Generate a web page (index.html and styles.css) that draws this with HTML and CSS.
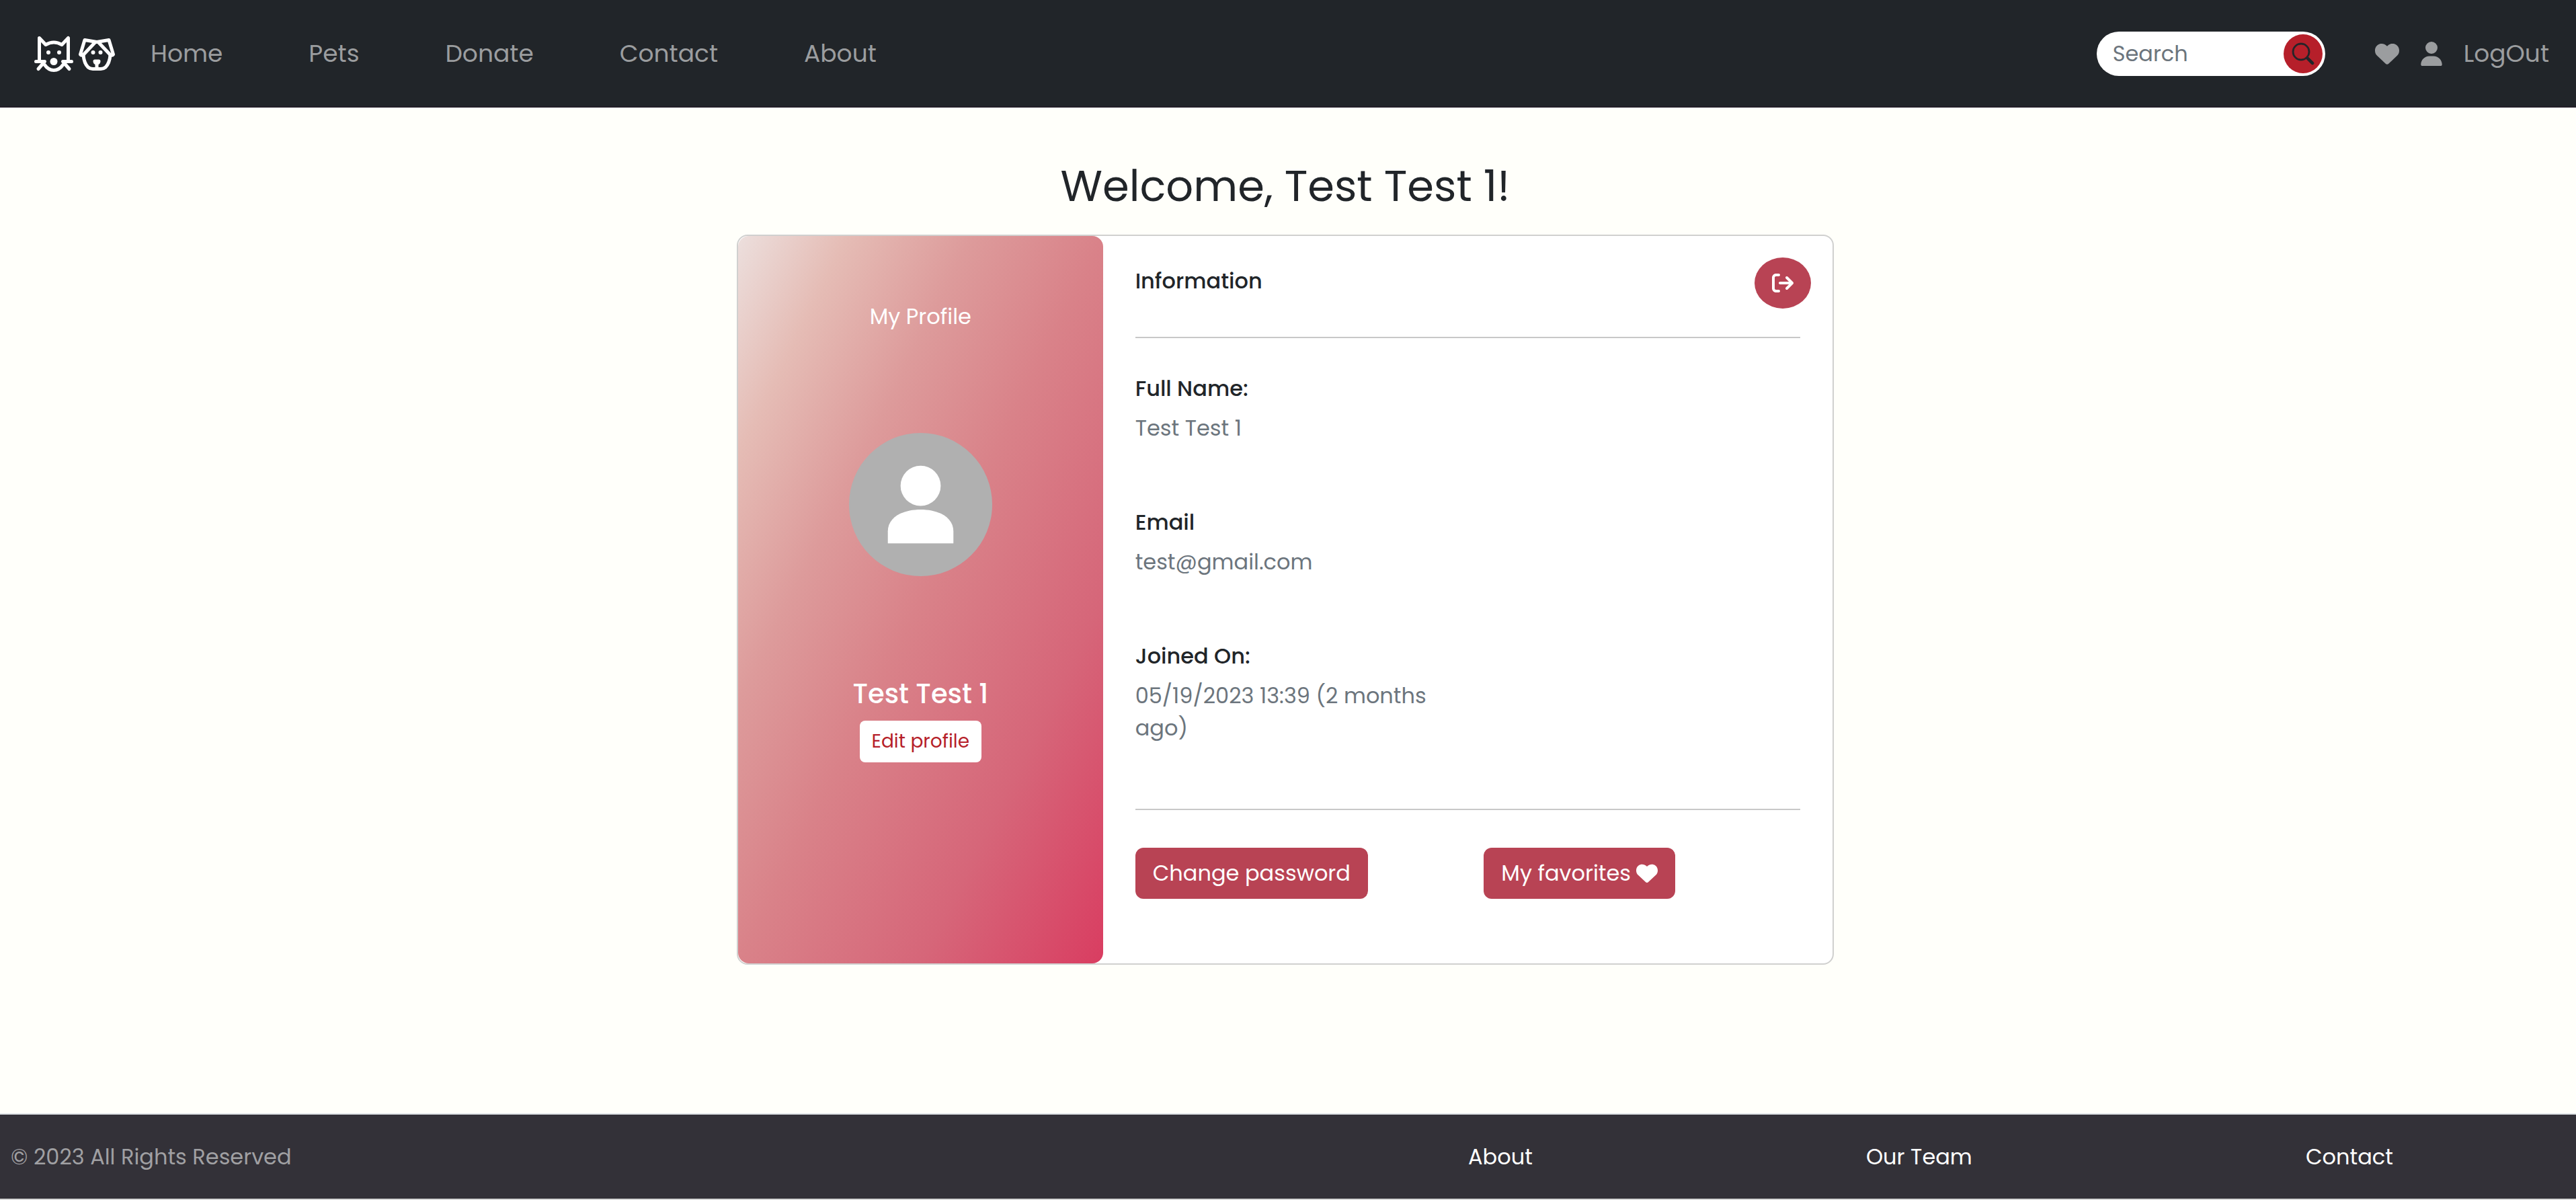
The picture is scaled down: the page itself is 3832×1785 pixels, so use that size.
FILE: index.html
```html
<!DOCTYPE html>
<html lang="en">
<head>
<meta charset="utf-8">
<meta name="viewport" content="width=device-width, initial-scale=1">
<title>My Profile</title>
<link rel="stylesheet" href="styles.css">
</head>
<body>
<header class="navbar">
  <a class="brand" href="#" aria-label="Pets home">
    <svg class="brand-icon" viewBox="0 0 60 60" fill="none" stroke="currentColor" stroke-width="5" stroke-linecap="round" stroke-linejoin="round">
      <path d="M8.500 39V6.500L18 16.500Q30 9.500 42 16.500L51.500 6.500V39"/>
      <path d="M3.500 41.500H16.500L7 52.500M56.500 41.500H43.500L53 52.500M16 46Q22 54.500 30 54.500T44 46"/>
      <g fill="currentColor" stroke="none"><circle cx="22" cy="28" r="3"/><circle cx="38" cy="28" r="3"/><circle cx="30" cy="41.500" r="5.500"/></g>
    </svg>
    <svg class="brand-icon" viewBox="0 0 60 60" fill="none" stroke="currentColor" stroke-width="5" stroke-linecap="round" stroke-linejoin="round">
      <path d="M30 12.500L12 9.500L5.500 31Q7 33 10 31.500L27 13.500M30 12.500L48 9.500L54.500 31Q53 33 50 31.500L33 13.500"/>
      <path d="M10 32Q11 44 17 50Q20 52.500 24 52.500H36Q40 52.500 43 50Q49 44 50 32"/>
      <path d="M30 42V51"/>
      <g fill="currentColor" stroke="none"><circle cx="24.500" cy="28" r="3"/><circle cx="35.500" cy="28" r="3"/><path d="M24.500 41Q24.500 38.500 27 38.500H33Q35.500 38.500 35.500 41Q35.500 46 30 46.500Q24.500 46 24.500 41"/></g>
    </svg>
  </a>
  <nav class="nav-links" aria-label="Main">
    <a href="#">Home</a>
    <a href="#">Pets</a>
    <a href="#">Donate</a>
    <a href="#">Contact</a>
    <a href="#">About</a>
  </nav>
  <form class="search" role="search">
    <input class="search-input" type="text" placeholder="Search" aria-label="Search">
    <button class="search-button" type="button" aria-label="Submit search">
      <svg width="32" height="32" viewBox="0 0 16 16" fill="currentColor" stroke="currentColor" stroke-width="0.4" overflow="visible"><path d="M11.742 10.344a6.500 6.500 0 1 0-1.397 1.398h-.001c.03.04.062.078.098.115l3.850 3.850a1 1 0 0 0 1.415-1.414l-3.850-3.850a1.007 1.007 0 0 0-.115-.1zM12 6.500a5.500 5.500 0 1 1-11 0 5.500 5.500 0 0 1 11 0z"/></svg>
    </button>
  </form>
  <nav class="account" aria-label="Account">
    <a href="#" aria-label="Favorites"><svg width="36" height="36" viewBox="0 0 512 512" fill="currentColor"><path d="M47.600 300.400L228.300 469.100c7.500 7 17.400 10.900 27.700 10.900s20.200-3.900 27.700-10.900L464.400 300.400c30.400-28.300 47.600-68 47.600-109.500v-5.800c0-69.900-50.500-129.500-119.400-141C347 36.500 300.600 51.400 268 84L256 96 244 84c-32.600-32.600-79-47.500-124.600-39.900C50.500 55.600 0 115.200 0 185.100v5.800c0 41.500 17.200 81.200 47.600 109.500z"/></svg></a>
    <a href="#" aria-label="Profile"><svg width="32" height="36" viewBox="0 0 448 512" fill="currentColor"><path d="M224 256A128 128 0 1 0 224 0a128 128 0 1 0 0 256zm-45.700 48C79.800 304 0 383.800 0 482.300C0 498.700 13.300 512 29.700 512H418.300c16.400 0 29.700-13.300 29.700-29.700C448 383.800 368.200 304 269.700 304H178.300z"/></svg></a>
    <a href="#">LogOut</a>
  </nav>
</header>

<main class="page">
  <h1 class="welcome">Welcome, Test Test 1!</h1>
  <section class="card">
    <aside class="profile">
      <p class="profile-label">My Profile</p>
      <svg class="avatar" viewBox="0 0 214 214" role="img" aria-label="Profile picture">
        <circle cx="107" cy="107" r="107" fill="#b0b0b0"/>
        <circle cx="107" cy="79" r="30" fill="#fff"/>
        <path d="M58 165V147C58 126 80 114.500 107 114.500S156 126 156 147V165Z" fill="#fff"/>
      </svg>
      <h2 class="profile-name">Test Test 1</h2>
      <button class="edit" type="button">Edit profile</button>
    </aside>
    <div class="details">
      <div class="details-head">
        <h3>Information</h3>
        <button class="btn btn-round" type="button" aria-label="Log out">
          <svg width="32" height="32" viewBox="0 0 512 512" fill="currentColor"><path d="M502.600 278.600c12.500-12.500 12.500-32.800 0-45.300l-128-128c-12.500-12.500-32.800-12.500-45.300 0s-12.500 32.800 0 45.300L402.700 224 192 224c-17.700 0-32 14.300-32 32s14.300 32 32 32l210.700 0-73.400 73.400c-12.500 12.500-12.500 32.800 0 45.300s32.800 12.500 45.300 0l128-128zM160 96c17.700 0 32-14.300 32-32s-14.300-32-32-32L96 32C43 32 0 75 0 128L0 384c0 53 43 96 96 96l64 0c17.700 0 32-14.300 32-32s-14.300-32-32-32l-64 0c-17.700 0-32-14.300-32-32l0-256c0-17.700 14.300-32 32-32l64 0z"/></svg>
        </button>
      </div>
      <dl class="facts">
        <div><dt>Full Name:</dt><dd>Test Test 1</dd></div>
        <div><dt>Email</dt><dd>test@gmail.com</dd></div>
        <div><dt>Joined On:</dt><dd>05/19/2023 13:39 (2 months ago)</dd></div>
      </dl>
      <div class="actions">
        <button class="btn" type="button">Change password</button>
        <button class="btn" type="button">My favorites <svg width="32" height="32" viewBox="0 0 512 512" fill="currentColor"><path d="M47.600 300.400L228.300 469.100c7.500 7 17.400 10.900 27.700 10.900s20.200-3.900 27.700-10.900L464.400 300.400c30.400-28.300 47.600-68 47.600-109.500v-5.800c0-69.900-50.500-129.500-119.400-141C347 36.500 300.600 51.400 268 84L256 96 244 84c-32.600-32.600-79-47.500-124.600-39.900C50.500 55.600 0 115.200 0 185.100v5.800c0 41.500 17.200 81.200 47.600 109.500z"/></svg></button>
      </div>
    </div>
  </section>
</main>

<footer class="footer">
  <p>© 2023 All Rights Reserved</p>
  <nav class="footer-links" aria-label="Footer">
    <a href="#">About</a>
    <a href="#">Our Team</a>
    <a href="#">Contact</a>
  </nav>
</footer>
</body>
</html>
```

FILE: styles.css
```css
*,
*::before,
*::after {
  box-sizing: border-box;
}

body {
  display: flex;
  flex-direction: column;
  min-height: 100vh;
  margin: 0;
  background: #fffffa;
  color: #212529;
  font-family: Poppins, Inter, sans-serif;
  font-size: 32px;
  line-height: 48px;
}

h1, h2, h3, p, dl, dd {
  margin: 0;
  font-weight: 400;
}

a {
  color: inherit;
  text-decoration: none;
}

button,
input {
  font: inherit;
}

svg {
  display: block;
}

/* Top bar */
.navbar {
  display: flex;
  align-items: center;
  height: 160px;
  padding: 2px 40px 0 50px;
  background: #212529;
  border-bottom: 2px solid #231f29;
  color: #9b9d9f;
  font-size: 36px;
}

.brand {
  display: flex;
  gap: 4px;
  color: #fff;
}

.brand-icon {
  width: 60px;
  height: 60px;
}

.nav-links {
  display: flex;
  gap: 128px;
  margin-left: 50px;
}

.search {
  display: flex;
  align-items: center;
  width: 340px;
  height: 66px;
  margin-left: auto;
  padding: 4px;
  border-radius: 33px;
  background: #fff;
}

.search-input {
  flex: 1;
  min-width: 0;
  padding: 0 20px;
  border: 0;
  outline: 0;
  background: none;
  color: #212529;
  font-size: 32px;
}

.search-input::placeholder {
  color: #6c757d;
  opacity: 1;
}

.search-button {
  display: grid;
  place-items: center;
  width: 58px;
  height: 58px;
  padding: 0;
  border: 0;
  border-radius: 50%;
  background: #b61f2a;
  color: #212529;
}

.account {
  display: flex;
  align-items: center;
  gap: 32px;
  margin-left: 74px;
}

/* Profile page */
.page {
  flex: 1;
  padding: 77px 8px 0 0;
}

.welcome {
  margin-bottom: 32px;
  font-size: 64px;
  line-height: 80px;
  text-align: center;
}

.card {
  display: grid;
  grid-template-columns: 1fr 2fr;
  max-width: 1632px;
  margin: 0 auto;
  border: 2px solid #d0d0cf;
  border-radius: 16px;
  background: #fff;
}

.profile {
  display: flex;
  flex-direction: column;
  align-items: center;
  padding: 96px 32px;
  border-radius: 16px;
  background: linear-gradient(to right bottom, #ecdfdd 0%, #e5bcb5 15%, #dd9b9b 32%, #d98289 50%, #d66679 75%, #d93d61 100%);
  color: #fff;
}

.avatar {
  width: 213px;
  height: 213px;
  margin: 149px 0 151px;
}

.profile-name {
  margin-bottom: 16px;
  font-size: 40px;
  font-weight: 500;
}

.edit {
  height: 62px;
  padding: 0 18px;
  border: 0;
  border-radius: 8px;
  background: #fff;
  color: #b61f2a;
  font-size: 28px;
}

.details {
  padding: 32px 48px 96px;
}

.details-head {
  display: flex;
  justify-content: space-between;
  align-items: flex-start;
  height: 120px;
  border-bottom: 2px solid #c8c8c8;
}

.details h3,
.facts dt {
  font-size: 32px;
  font-weight: 500;
  line-height: 39px;
}

.details h3 {
  padding-top: 15px;
}

.facts {
  display: grid;
  gap: 96px;
  padding: 55px 0 96px;
  border-bottom: 2px solid #c8c8c8;
}

.facts div,
.actions {
  display: grid;
  grid-template-columns: 1fr 1fr;
  column-gap: 48px;
}

.facts dt {
  grid-column: 1;
  margin-bottom: 16px;
}

.facts dd {
  grid-column: 1;
  color: #6c757d;
}

.actions {
  padding-top: 56px;
}

.btn {
  display: flex;
  align-items: center;
  justify-self: start;
  gap: 8px;
  height: 76px;
  padding: 0 26px;
  border: 0;
  border-radius: 12px;
  background: #b84354;
  color: #fff;
}

.btn-round {
  margin-right: -16px;
  border-radius: 50%;
}

/* Footer */
.footer {
  display: grid;
  grid-template-columns: 1fr 1fr;
  align-items: center;
  height: 129px;
  padding: 0 24px 0 16px;
  border-top: 2px solid #dee2e6;
  border-bottom: 2px solid #d8d8d8;
  background: #333138;
  color: #a0a0a3;
}

.footer-links {
  display: flex;
  justify-content: space-around;
  padding-left: 24px;
  color: #fff;
}
```
